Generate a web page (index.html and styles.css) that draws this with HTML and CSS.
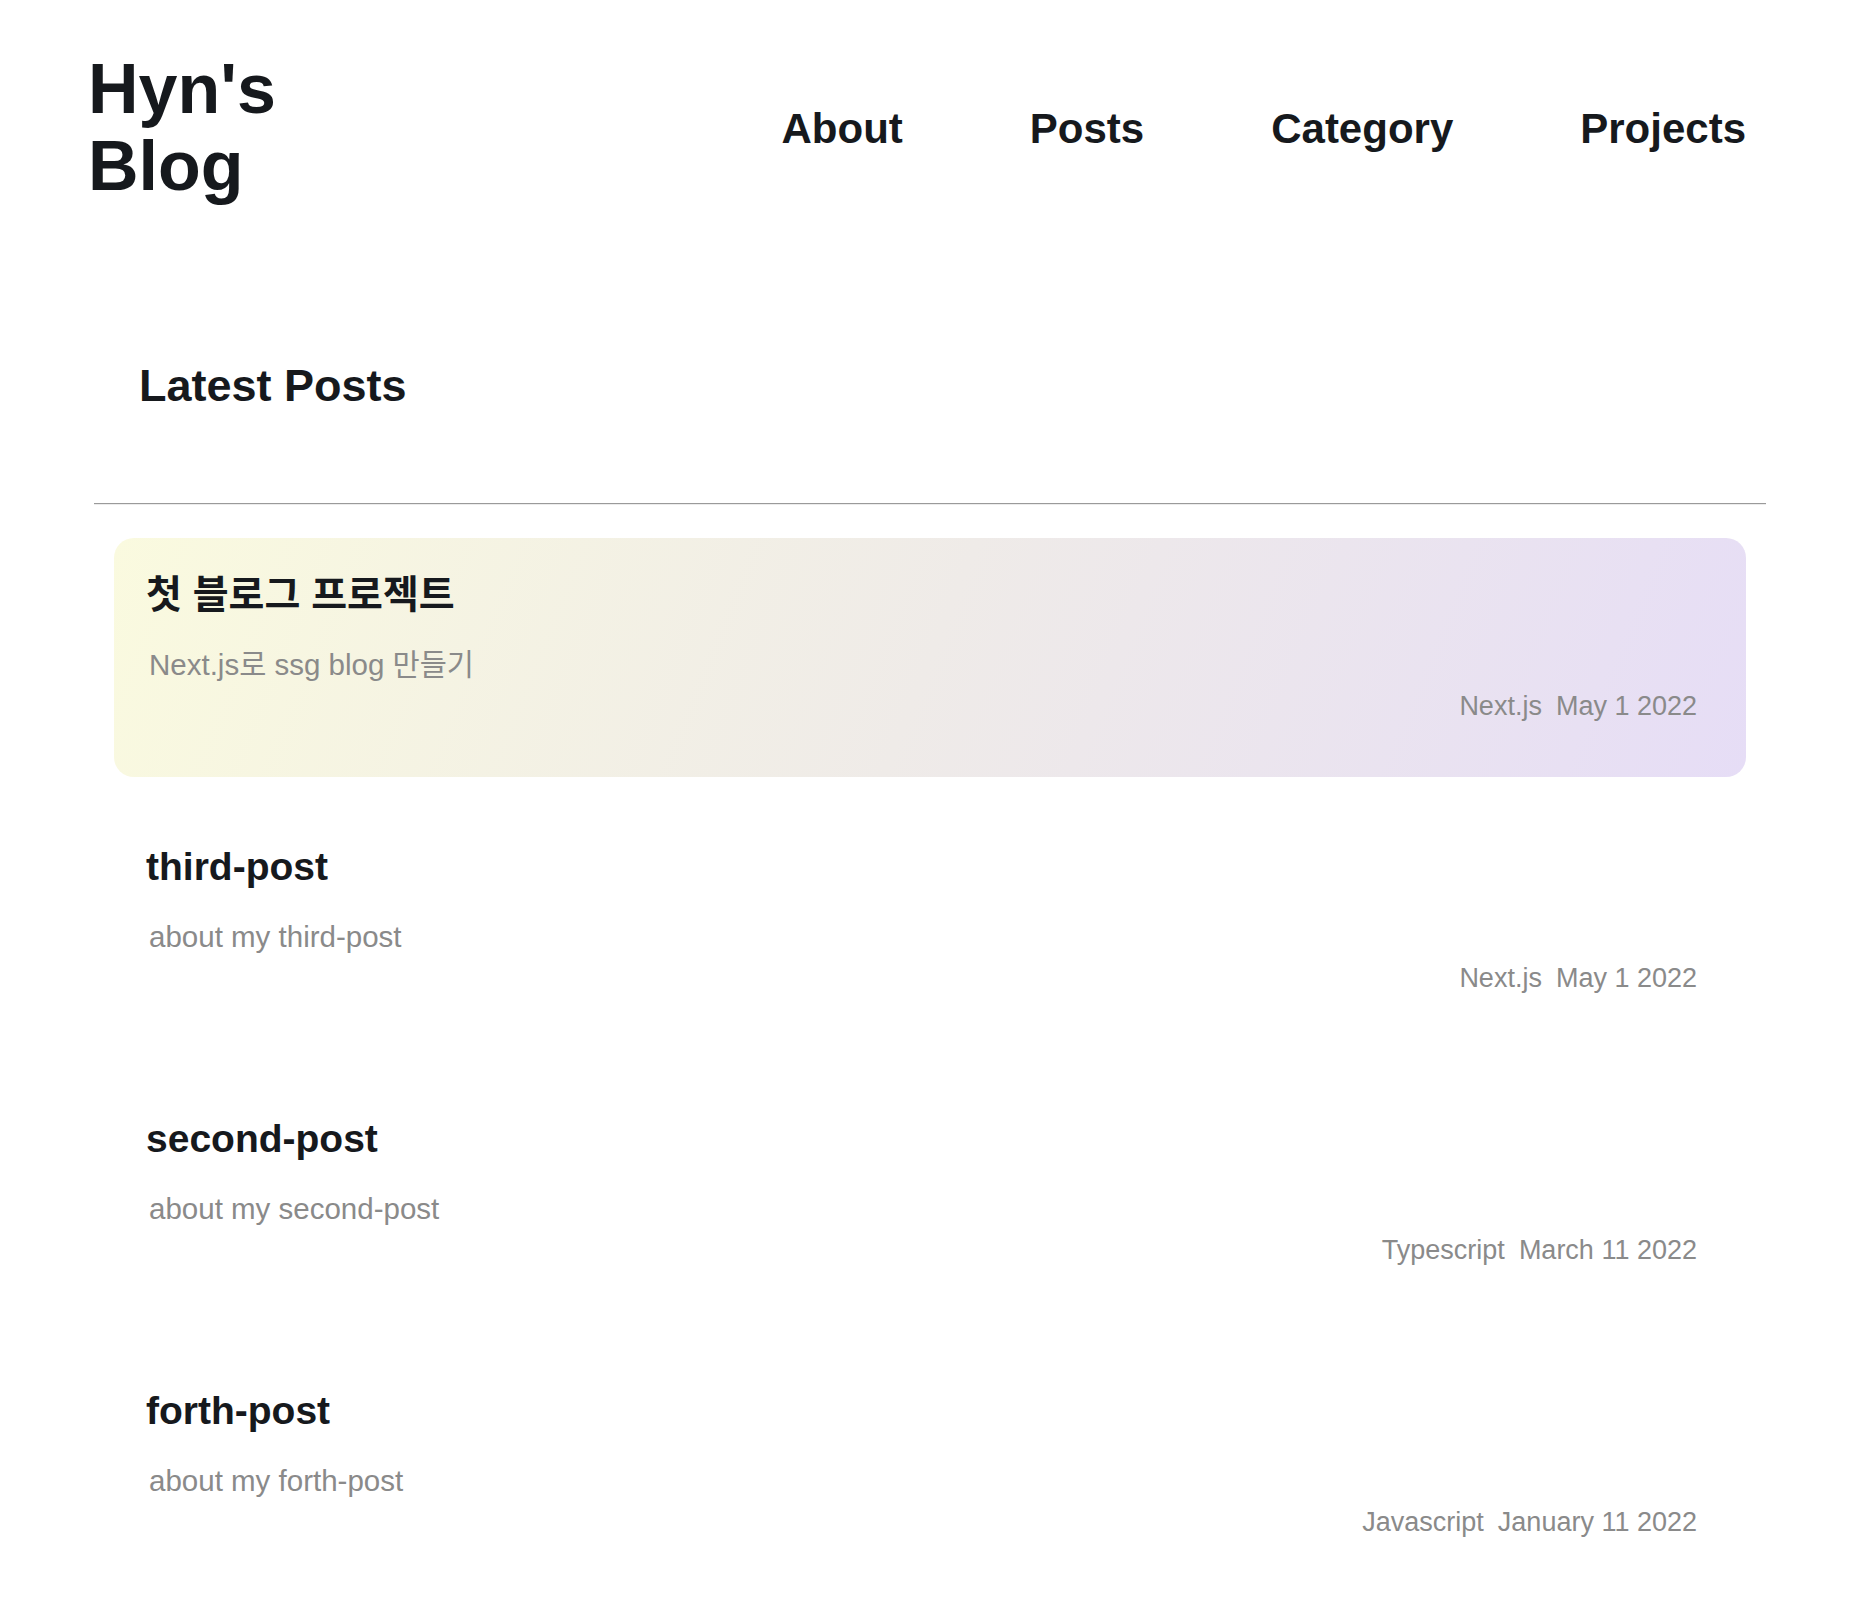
FILE: index.html
```html
<!DOCTYPE html>
<html lang="ko">
<head>
<meta charset="utf-8">
<title>Hyn's Blog</title>
<link rel="stylesheet" href="styles.css">
</head>
<body>
<header class="site-header">
  <h1 class="logo">Hyn's Blog</h1>
  <nav class="nav">
    <a class="nav-link" href="#">About</a>
    <a class="nav-link" href="#">Posts</a>
    <a class="nav-link" href="#">Category</a>
    <a class="nav-link" href="#">Projects</a>
  </nav>
</header>
<main class="main">
  <h2 class="latest-title">Latest Posts</h2>
  <hr class="divider">
  <ul class="post-list">
    <li class="post post--featured">
      <h3 class="post-title">첫 블로그 프로젝트</h3>
      <p class="post-desc">Next.js로 ssg blog 만들기</p>
      <p class="post-meta"><span>Next.js</span><span>May 1 2022</span></p>
    </li>
    <li class="post">
      <h3 class="post-title">third-post</h3>
      <p class="post-desc">about my third-post</p>
      <p class="post-meta"><span>Next.js</span><span>May 1 2022</span></p>
    </li>
    <li class="post">
      <h3 class="post-title">second-post</h3>
      <p class="post-desc">about my second-post</p>
      <p class="post-meta"><span>Typescript</span><span>March 11 2022</span></p>
    </li>
    <li class="post">
      <h3 class="post-title">forth-post</h3>
      <p class="post-desc">about my forth-post</p>
      <p class="post-meta"><span>Javascript</span><span>January 11 2022</span></p>
    </li>
  </ul>
</main>
</body>
</html>
```

FILE: styles.css
```css
body {
  margin: 0;
  font-family: "Liberation Sans", "Noto Sans CJK KR", Arial, sans-serif;
  color: #16191d;
  background: #ffffff;
}

.site-header {
  display: flex;
  justify-content: space-between;
  align-items: center;
  padding: 51px 114px 0 88px;
}

.logo {
  margin: 0;
  width: 230px;
  font-size: 70px;
  line-height: 77px;
  font-weight: 700;
}

.nav {
  display: flex;
  gap: 127px;
}

.nav-link {
  font-size: 42px;
  line-height: 47px;
  font-weight: 700;
  color: inherit;
  text-decoration: none;
}

.main {
  padding: 0 94px 40px;
}

.latest-title {
  margin: 155px 0 0 45px;
  font-size: 45px;
  line-height: 51px;
  font-weight: 700;
}

.divider {
  margin: 92px 0 0;
  height: 0;
  border: 0;
  border-top: 1px solid #9a9a9a;
  border-bottom: 1px solid #ececec;
}

.post-list {
  list-style: none;
  margin: 33px 0 0;
  padding: 0 20px;
  display: flex;
  flex-direction: column;
  gap: 33px;
}

.post {
  padding: 34px 49px 61px 32px;
  border-radius: 20px;
}

.post--featured {
  background: linear-gradient(112deg, #fafadf 0%, #efebe8 50%, #e6ddf6 100%);
}

.post-title {
  margin: 0;
  font-size: 39px;
  line-height: 45px;
  font-weight: 700;
}

.post-desc {
  margin: 35px 0 0 3px;
  font-size: 29.5px;
  line-height: 26px;
  color: #8a8a8a;
}

.post-meta {
  margin: 18px 0 0;
  display: flex;
  justify-content: flex-end;
  gap: 14px;
  font-size: 27px;
  line-height: 20px;
  color: #8a8a8a;
}
```
